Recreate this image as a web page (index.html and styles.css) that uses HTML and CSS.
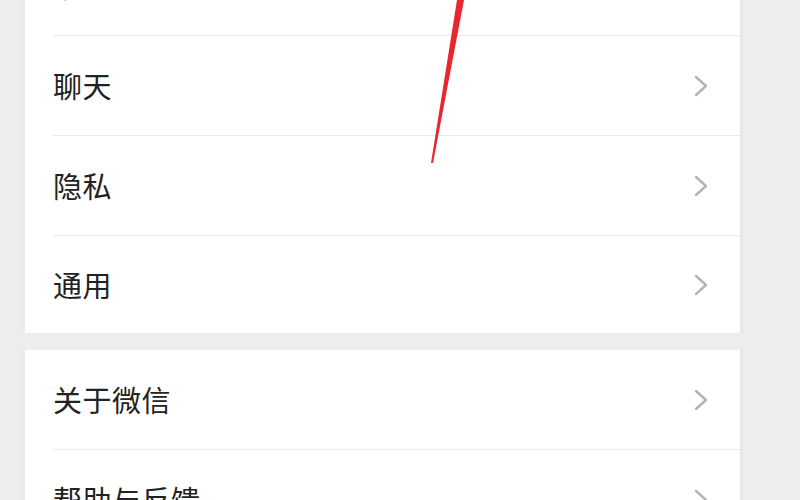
FILE: index.html
```html
<!DOCTYPE html>
<html lang="zh-CN">
<head>
<meta charset="utf-8">
<title>设置</title>
<link rel="stylesheet" href="styles.css">
</head>
<body>
<div class="page">
  <div class="card card-first">
    <div class="row"><span class="label">消息通知</span><svg class="chev" viewBox="0 0 14 22"><path d="M2 2 L12 11 L2 20"/></svg></div>
    <div class="row"><span class="label">聊天</span><svg class="chev" viewBox="0 0 14 22"><path d="M2 2 L12 11 L2 20"/></svg></div>
    <div class="row"><span class="label">隐私</span><svg class="chev" viewBox="0 0 14 22"><path d="M2 2 L12 11 L2 20"/></svg></div>
    <div class="row row-last"><span class="label">通用</span><svg class="chev" viewBox="0 0 14 22"><path d="M2 2 L12 11 L2 20"/></svg></div>
  </div>
  <div class="card">
    <div class="row"><span class="label">关于微信</span><svg class="chev" viewBox="0 0 14 22"><path d="M2 2 L12 11 L2 20"/></svg></div>
    <div class="row"><span class="label">帮助与反馈</span><svg class="chev" viewBox="0 0 14 22"><path d="M2 2 L12 11 L2 20"/></svg></div>
  </div>
</div>
<svg class="annot" width="800" height="500" viewBox="0 0 800 500">
  <polygon points="457,0 464,0 433,163 431,163" fill="#e8262d"/>
</svg>
</body>
</html>
```
FILE: styles.css
```css
html, body {
  margin: 0;
  padding: 0;
}
body {
  width: 800px;
  height: 500px;
  overflow: hidden;
  background: #ededed;
  font-family: "Noto Sans CJK SC", "Noto Sans", sans-serif;
  position: relative;
}
.page {
  padding-left: 25px;
  width: 715px;
  display: flex;
  flex-direction: column;
  gap: 17px;
}
.card {
  background: #ffffff;
  display: flex;
  flex-direction: column;
  box-shadow: 3px 0 0 #e6e6e6, -6px 0 0 #ebebeb;
}
.card-first {
  margin-top: -64px;
}
.row {
  height: 99px;
  display: flex;
  align-items: center;
  justify-content: space-between;
  padding: 0 32px 0 28px;
  position: relative;
}
.row + .row::before {
  content: "";
  position: absolute;
  left: 28px;
  right: 0;
  top: -1px;
  height: 1px;
  background: #e9e9e9;
}
.row + .row {
  margin-top: 1px;
}
.row-last {
  height: 97px;
}
.label {
  font-size: 29px;
  color: #222222;
  line-height: 1;
  letter-spacing: 0.5px;
}
.chev {
  width: 14px;
  height: 22px;
  fill: none;
  stroke: #b4b4b4;
  stroke-width: 2.4;
  stroke-linecap: round;
  stroke-linejoin: round;
}
.annot {
  position: absolute;
  left: 0;
  top: 0;
  pointer-events: none;
}
```
